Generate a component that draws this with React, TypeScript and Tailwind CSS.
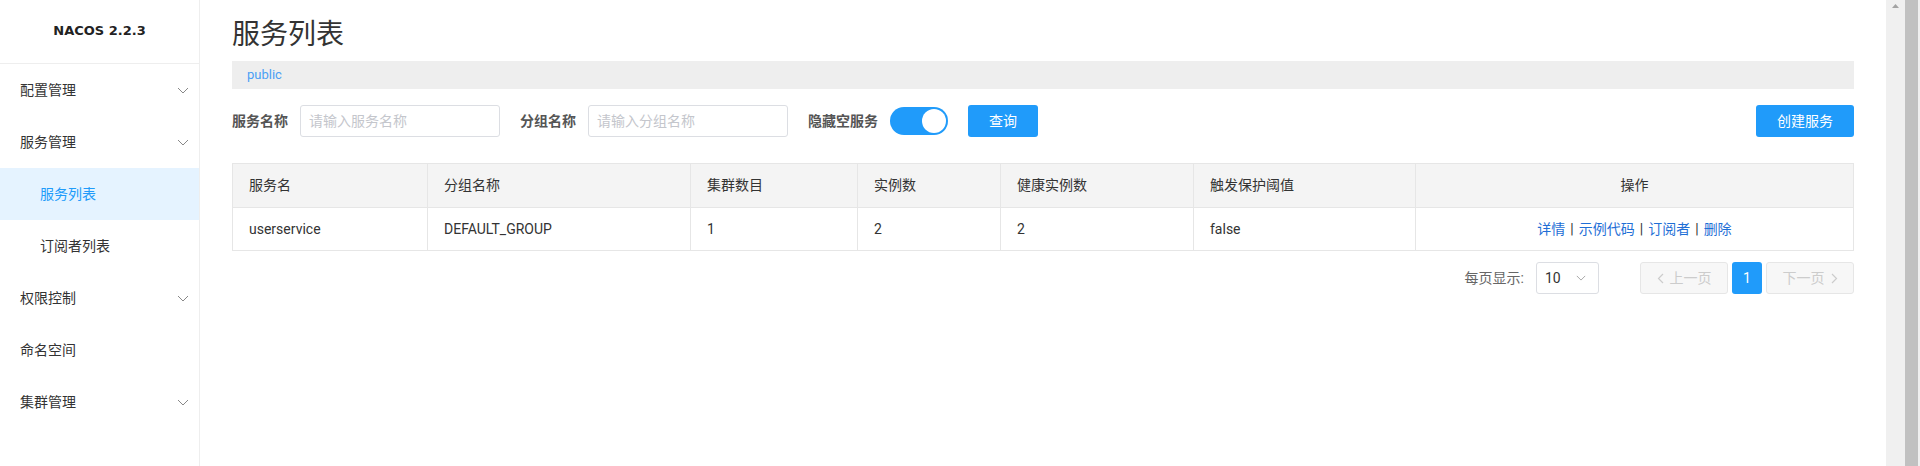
import React from "react";

const menu = [
  { label: "配置管理", arrow: true },
  { label: "服务管理", arrow: true },
  { label: "服务列表", sub: true, active: true },
  { label: "订阅者列表", sub: true },
  { label: "权限控制", arrow: true },
  { label: "命名空间" },
  { label: "集群管理", arrow: true },
];

const columns = [
  { title: "服务名", w: 195 },
  { title: "分组名称", w: 263 },
  { title: "集群数目", w: 167 },
  { title: "实例数", w: 143 },
  { title: "健康实例数", w: 193 },
  { title: "触发保护阈值", w: 222 },
  { title: "操作", w: 439 },
];

const row = ["userservice", "DEFAULT_GROUP", "1", "2", "2", "false"];
const actions = ["详情", "示例代码", "订阅者", "删除"];

const Chevron = ({ className }: { className?: string }) => (
  <svg className={className} width="12" height="7" viewBox="0 0 12 7" fill="none">
    <path d="M1 1L6 6L11 1" stroke="currentColor" strokeWidth="1" />
  </svg>
);

const Sidebar = () => (
  <div className="w-[200px] shrink-0 border-r border-[#eeeeee] flex flex-col">
    <div className="h-[64px] border-b border-[#eeeeee] flex items-center justify-center pb-[2px]">
      <span className="font-['DejaVu_Sans',sans-serif] font-bold text-[13px] text-[#222]">
        NACOS 2.2.3
      </span>
    </div>
    {menu.map((item, i) => (
      <div
        key={i}
        className={
          "h-[52px] flex items-center justify-between text-[14px] " +
          (item.sub ? "pl-[40px] " : "pl-[20px] ") +
          (item.active ? "bg-[#e5f3ff] text-[#209bfa]" : "text-[#333]")
        }
      >
        <span>{item.label}</span>
        {item.arrow ? <Chevron className="mr-[10px] text-[#888]" /> : null}
      </div>
    ))}
  </div>
);

const Label = ({ children }: { children: React.ReactNode }) => (
  <span className="text-[14px] font-bold text-[#555] mr-[12px]">{children}</span>
);

const Input = ({ placeholder }: { placeholder: string }) => (
  <div className="w-[200px] h-[32px] border border-[#dcdee3] rounded-[3px] flex items-center px-[8px] text-[14px] text-[#c4c6cc] mr-[20px]">
    {placeholder}
  </div>
);

const Filters = () => (
  <div className="flex items-center mt-[16px] h-[32px]">
    <Label>服务名称</Label>
    <Input placeholder="请输入服务名称" />
    <Label>分组名称</Label>
    <Input placeholder="请输入分组名称" />
    <Label>隐藏空服务</Label>
    <div className="w-[58px] h-[28px] rounded-full bg-[#209bfa] flex items-center justify-end pr-[2px] mr-[20px]">
      <div className="w-[24px] h-[24px] rounded-full bg-white" />
    </div>
    <button className="w-[70px] h-[32px] rounded-[3px] bg-[#209bfa] text-white text-[14px]">
      查询
    </button>
    <div className="flex-1" />
    <button className="w-[98px] h-[32px] rounded-[3px] bg-[#209bfa] text-white text-[14px]">
      创建服务
    </button>
  </div>
);

const Table = () => (
  <table className="mt-[26px] w-full table-fixed border-collapse text-[14px] text-[#333]">
    <colgroup>
      {columns.map((c, i) => (
        <col key={i} style={{ width: i === columns.length - 1 ? undefined : c.w }} />
      ))}
    </colgroup>
    <thead>
      <tr className="h-[44px] bg-[#f4f4f4]">
        {columns.map((c, i) => (
          <th
            key={i}
            className={
              "border border-[#e6e6e6] px-[16px] font-normal " +
              (i === columns.length - 1 ? "text-center" : "text-left")
            }
          >
            {c.title}
          </th>
        ))}
      </tr>
    </thead>
    <tbody>
      <tr className="h-[43px]">
        {row.map((v, i) => (
          <td key={i} className="border border-[#e6e6e6] px-[16px]">
            {v}
          </td>
        ))}
        <td className="border border-[#e6e6e6] px-[16px] text-center">
          {actions.map((a, i) => (
            <React.Fragment key={i}>
              {i > 0 ? <span className="text-[#333] mx-[5px]">|</span> : null}
              <a className="text-[#1f6fd6] cursor-pointer">{a}</a>
            </React.Fragment>
          ))}
        </td>
      </tr>
    </tbody>
  </table>
);

const Pagination = () => (
  <div className="flex items-center justify-end mt-[11px] text-[14px]">
    <span className="text-[#666] mr-[12px]">每页显示:</span>
    <div className="w-[63px] h-[32px] border border-[#dcdee3] rounded-[3px] flex items-center justify-between pl-[8px] pr-[12px] text-[#333] mr-[41px]">
      <span>10</span>
      <Chevron className="text-[#999] w-[10px] h-[6px]" />
    </div>
    <div className="w-[88px] h-[32px] border border-[#e6e6e6] bg-[#f7f7f7] rounded-[3px] flex items-center justify-center gap-[6px] text-[#ccc]">
      <svg width="7" height="11" viewBox="0 0 7 11" fill="none">
        <path d="M6 1L1.5 5.5L6 10" stroke="currentColor" strokeWidth="1.2" />
      </svg>
      <span>上一页</span>
    </div>
    <div className="w-[30px] h-[32px] rounded-[3px] bg-[#209bfa] text-white flex items-center justify-center mx-[4px]">
      1
    </div>
    <div className="w-[88px] h-[32px] border border-[#e6e6e6] bg-[#f7f7f7] rounded-[3px] flex items-center justify-center gap-[6px] text-[#ccc]">
      <span>下一页</span>
      <svg width="7" height="11" viewBox="0 0 7 11" fill="none">
        <path d="M1 1L5.5 5.5L1 10" stroke="currentColor" strokeWidth="1.2" />
      </svg>
    </div>
  </div>
);

const Scrollbar = () => (
  <div className="w-[34px] shrink-0 flex">
    <div className="w-[19px] bg-[#f0f0f0] flex justify-center pt-[4px]">
      <svg width="7" height="4" viewBox="0 0 7 4">
        <path d="M3.5 0L7 4H0Z" fill="#a3a3a3" />
      </svg>
    </div>
    <div className="w-[13px] bg-[#c1c1c1]" />
    <div className="w-[2px] bg-[#f0f0f0]" />
  </div>
);

export default function App() {
  return (
    <div className="flex h-[466px] w-full bg-white font-[Roboto,'Noto_Sans_CJK_SC',sans-serif] overflow-hidden">
      <Sidebar />
      <div className="flex-1 px-[32px] flex flex-col">
        <h1 className="pt-[14px] h-[61px] text-[28px] leading-[42px] text-[#333] font-normal">
          服务列表
        </h1>
        <div className="h-[28px] bg-[#eeeeee] flex items-center pl-[15px] text-[13px] text-[#4a9ff5]">
          public
        </div>
        <Filters />
        <Table />
        <Pagination />
      </div>
      <Scrollbar />
    </div>
  );
}
